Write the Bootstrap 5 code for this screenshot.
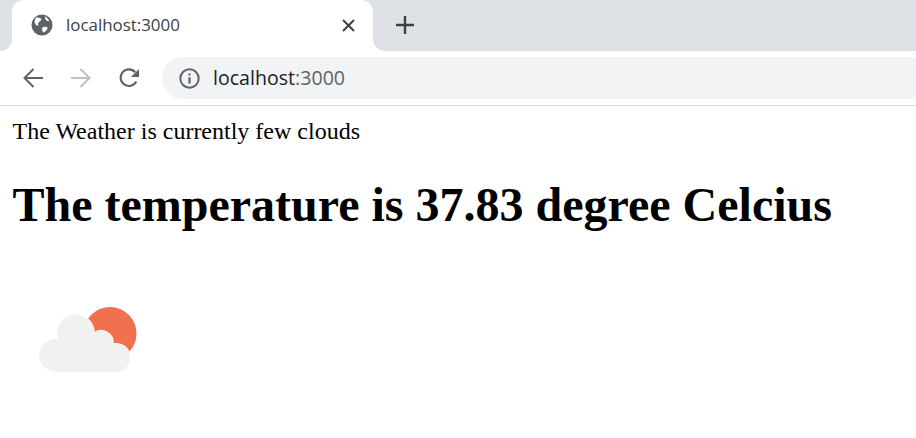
<!DOCTYPE html>
<html lang="en">
<head>
    <meta charset="UTF-8">
    <meta name="viewport" content="width=device-width, initial-scale=1.0">
    <title>localhost:3000</title>
    <link rel="stylesheet" href="https://cdn.jsdelivr.net/npm/bootstrap@5.3.0/dist/css/bootstrap.min.css">
    <style>
        body {
            background-color: #fff;
            color: #000;
            overflow: hidden;
        }
        .tab-strip {
            height: 51px;
            background: #dee1e6;
            padding-left: 12px;
        }
        .page-tab {
            position: relative;
            width: 361px;
            background: #fff;
            border-radius: 12px 12px 0 0;
            padding: 0 18px 1px 19px;
        }
        .page-tab::before,
        .page-tab::after {
            content: "";
            position: absolute;
            bottom: 0;
            width: 12px;
            height: 12px;
        }
        .page-tab::before {
            left: -12px;
            background: radial-gradient(circle at 0 0, #dee1e6 11.5px, #fff 12.5px);
        }
        .page-tab::after {
            right: -12px;
            background: radial-gradient(circle at 100% 0, #dee1e6 11.5px, #fff 12.5px);
        }
        .tab-title {
            font-family: "Open Sans", sans-serif;
            font-size: 16.9px;
            color: #3c4043;
            margin-left: 13px;
        }
        .plus-box {
            margin-left: 23px;
            padding-bottom: 1px;
        }
        .tool-row {
            height: 55px;
            border-bottom: 1px solid #dadce0;
            padding: 6px 0 6px 23px;
            gap: 28px;
        }
        .tool-row svg {
            flex: none;
        }
        .omni {
            height: 42px;
            background: #f1f3f4;
            border-radius: 21px 0 0 21px;
            padding-left: 17px;
            margin-left: -5px;
            font-family: "Open Sans", sans-serif;
            font-size: 19.6px;
            color: #202124;
        }
        .omni-port {
            color: #5f6368;
        }
        .omni-text {
            margin-left: 13px;
        }
        .page-body {
            padding: 12px 12.5px;
            font-family: "Liberation Serif", serif;
        }
        .weather-line {
            font-size: 24px;
            line-height: 27px;
            margin: 0;
        }
        .temp-line {
            font-family: "Liberation Serif", serif;
            font-size: 48px;
            font-weight: 700;
            line-height: 55px;
            margin: 32px 0 0;
        }
        .weather-pic {
            display: block;
            margin-top: 32px;
            margin-left: .5px;
            filter: blur(.4px);
        }
    </style>
</head>
<body>

<div class="tab-strip d-flex">
    <div class="page-tab d-flex align-items-center">
        <svg width="22" height="22" viewBox="0 0 22 22">
            <circle cx="11" cy="11" r="10.5" fill="#5f6368"/>
            <path d="M5 3.200c2 .3 4 .6 5.500 1.800-.2 1.500-1.400 2-2.400 3C7 9 6.400 10.500 7.800 11.600c-2 .3-3.300-1-4-2.700-.5-1.300-.3-2.400.3-3.500zM12.300 13c1.500-.5 3.600-.2 4.400.8-.6 2-2 3.500-3.900 4.600-.9-.6-1.700-1.700-1.800-2.900 0-1 .4-2 1.300-2.500zM14 2.500c2 1 3.500 2.500 4.200 4.600-1.200.3-2.500-.2-3.300-1.100-.6-.8-1-2.400-.9-3.500z" fill="#fff"/>
        </svg>
        <span class="tab-title flex-grow-1">localhost:3000</span>
        <svg width="13" height="13" viewBox="0 0 13 13">
            <path d="M1 1l11 11M12 1L1 12" stroke="#3c4043" stroke-width="2" fill="none"/>
        </svg>
    </div>
    <div class="d-flex align-items-center plus-box">
        <svg width="18" height="18" viewBox="0 0 18 18">
            <path d="M9 0v18M0 9h18" stroke="#3c4043" stroke-width="2.400" fill="none"/>
        </svg>
    </div>
</div>

<div class="tool-row d-flex align-items-center">
    <svg width="20" height="20" viewBox="0 0 20 20">
        <path d="M20 10H2M10.500 1L1.500 10l9 9" stroke="#5f6368" stroke-width="2" fill="none"/>
    </svg>
    <svg width="20" height="20" viewBox="0 0 20 20">
        <path d="M0 10h18M9.500 1l9 9-9 9" stroke="#bdc1c6" stroke-width="2" fill="none"/>
    </svg>
    <svg width="20" height="20" viewBox="0 0 20 20">
        <path d="M17.300 13.500A8.300 8.300 0 1 1 16.200 4.200" stroke="#5f6368" stroke-width="2.100" fill="none"/>
        <path d="M20 1v8h-8z" fill="#5f6368"/>
    </svg>
    <div class="omni flex-grow-1 d-flex align-items-center">
        <svg width="21" height="21" viewBox="0 0 21 21">
            <circle cx="10.500" cy="10.500" r="9.200" stroke="#5f6368" stroke-width="2" fill="none"/>
            <path d="M9.400 9.200h2.200v6.200H9.400zM9.400 5.400h2.200v2.200H9.400z" fill="#5f6368"/>
        </svg>
        <span class="omni-text">localhost<span class="omni-port">:3000</span></span>
    </div>
</div>

<div class="page-body">
    <p class="weather-line">The Weather is currently few clouds</p>
    <h1 class="temp-line">The temperature is 37.83 degree Celcius</h1>
    <svg class="weather-pic" width="150" height="150" viewBox="0 0 150 150">
        <circle cx="97" cy="69.500" r="26.500" fill="#f0714f"/>
        <path d="M44 108A17.500 17.500 0 0 1 26 90.500A17 17 0 0 1 45 75A18.500 18.500 0 1 1 81 69A12 12 0 0 1 100 80A14 14 0 0 1 117 93.500A14 14 0 0 1 102 108Z" fill="#f1f1ef" stroke="#fff" stroke-width="1.500" paint-order="stroke"/>
    </svg>
</div>

</body>
</html>
